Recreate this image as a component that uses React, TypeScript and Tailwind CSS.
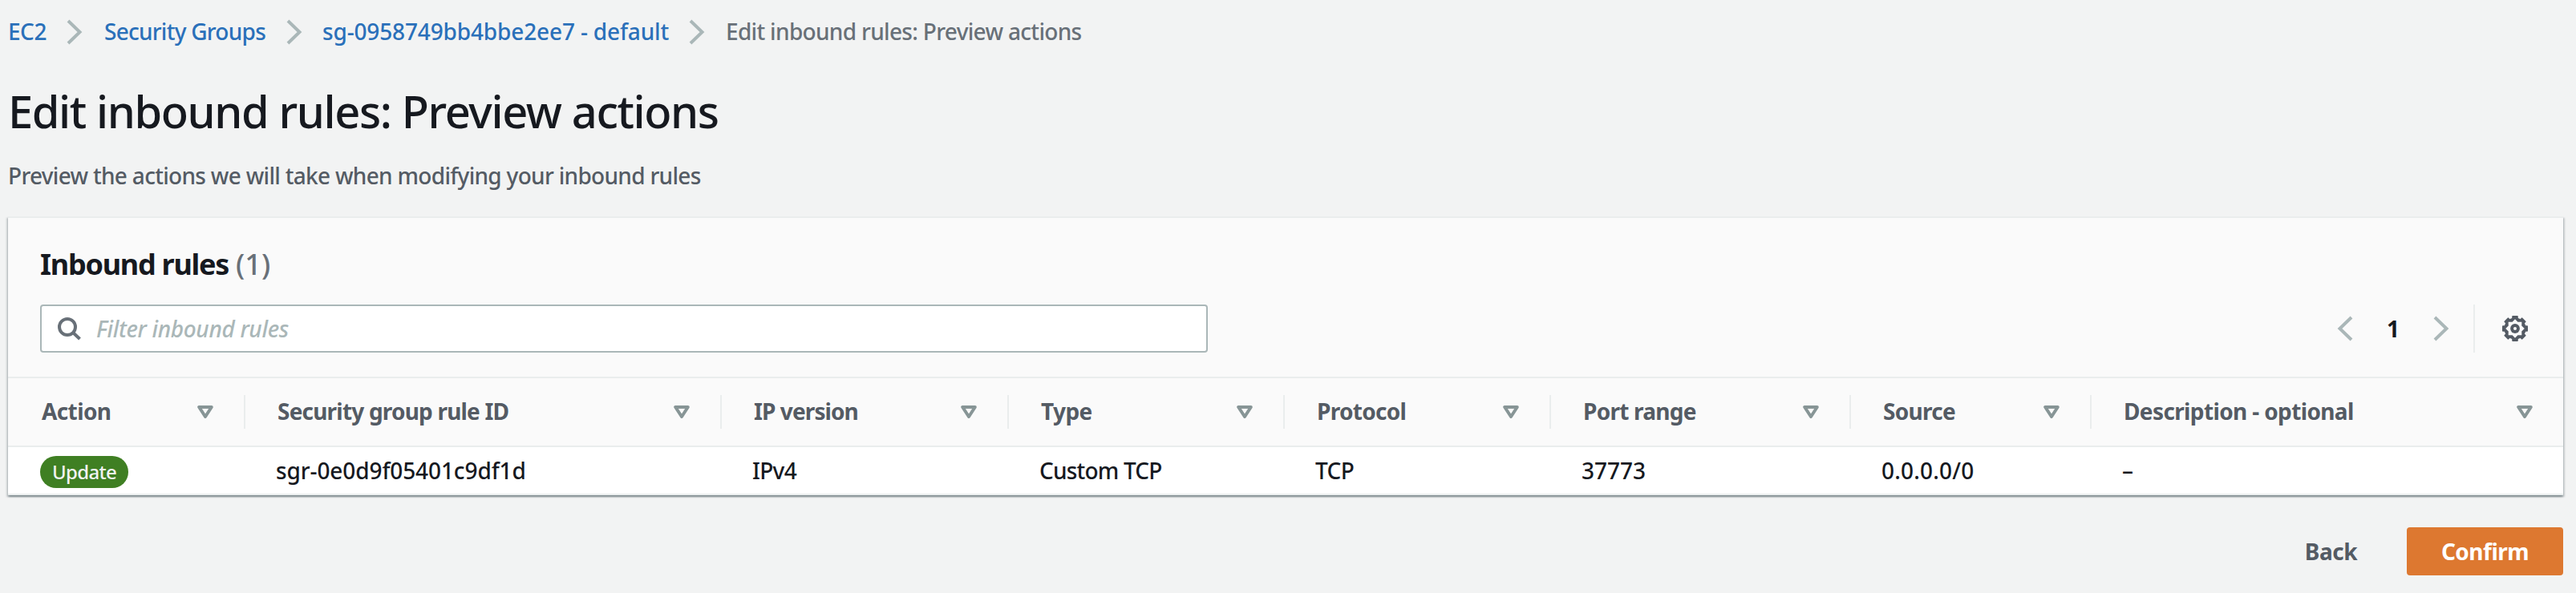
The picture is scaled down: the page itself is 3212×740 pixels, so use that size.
type Column = { label: string; value: string; tracking?: string; valueTracking?: string; badge?: boolean };

const columns: Column[] = [
  { label: "Action", value: "Update", tracking: "tracking-[-0.6px]", badge: true },
  { label: "Security group rule ID", value: "sgr-0e0d9f05401c9df1d", tracking: "tracking-[-0.8px]", valueTracking: "tracking-[-0.1px]" },
  { label: "IP version", value: "IPv4", tracking: "tracking-[-0.9px]", valueTracking: "tracking-[-0.7px]" },
  { label: "Type", value: "Custom TCP", tracking: "tracking-[-0.6px]", valueTracking: "tracking-[-0.8px]" },
  { label: "Protocol", value: "TCP", tracking: "tracking-[-0.7px]", valueTracking: "tracking-[-0.6px]" },
  { label: "Port range", value: "37773", tracking: "tracking-[-0.75px]" },
  { label: "Source", value: "0.0.0.0/0", tracking: "tracking-[-0.7px]", valueTracking: "tracking-[0.2px]" },
  { label: "Description - optional", value: "–", tracking: "tracking-[-0.63px]" },
];

const gridCols = "grid grid-cols-[296px_594px_358px_344px_332px_374px_300px_1fr]";

const gearStar = Array.from({ length: 16 }, (_, i) => {
  const r = i % 2 === 0 ? 11.8 : 8.9;
  const a = (i * Math.PI) / 8;
  return `${(16 + r * Math.sin(a)).toFixed(2)},${(16 - r * Math.cos(a)).toFixed(2)}`;
}).join(" ");

function ChevronRight({ className = "" }: { className?: string }) {
  return (
    <svg className={className} width="20" height="32" viewBox="0 0 20 32" fill="none" stroke="#aab7b8" strokeWidth="4">
      <path d="M2 2l14.5 14L2 30" />
    </svg>
  );
}

function ChevronLeft() {
  return (
    <svg width="20" height="32" viewBox="0 0 20 32" fill="none" stroke="#aab7b8" strokeWidth="4">
      <path d="M18 2L3.5 16 18 30" />
    </svg>
  );
}

function SortIcon() {
  return (
    <svg className="shrink-0" width="20" height="18" viewBox="0 0 20 18" fill="none" stroke="#879596" strokeWidth="4" strokeLinejoin="round">
      <path d="M2.2 3h15.6L10 15z" />
    </svg>
  );
}

function SearchIcon() {
  return (
    <svg width="32" height="32" viewBox="0 0 32 32" fill="none" stroke="#687078" strokeWidth="4">
      <circle cx="14" cy="14" r="10" />
      <path d="M21 21l8.5 8" />
    </svg>
  );
}

function GearIcon() {
  return (
    <svg width="32" height="32" viewBox="0 0 32 32" fill="#545b64">
      <circle cx="16" cy="16" r="13.6" />
      {[0, 45, 90, 135].map((deg) => (
        <rect key={deg} x="12.2" y="0" width="7.6" height="32" rx="1" transform={`rotate(${deg} 16 16)`} />
      ))}
      <polygon points={gearStar} fill="#fafafa" />
      <circle cx="16" cy="16" r="5.9" />
      <circle cx="16" cy="16" r="2" fill="#fafafa" />
    </svg>
  );
}

export default function App() {
  return (
    <div className="h-[740px] w-[3212px] overflow-hidden bg-[#f2f3f3] pl-[10px] pr-4 pt-[19px] font-['Noto_Sans',sans-serif] text-[28px] font-medium leading-[40px] text-[#16191f]">
      <nav className="flex h-10 items-center whitespace-nowrap text-[#2a70ba]">
        <a className="w-[73px] tracking-[-0.5px]">EC2</a>
        <ChevronRight className="mt-[2px]" />
        <a className="ml-[27px] w-[227px] tracking-[-0.75px]">Security Groups</a>
        <ChevronRight className="mt-[2px]" />
        <a className="ml-[25px] w-[457px] tracking-[-0.15px]">sg-0958749bb4bbe2ee7 - default</a>
        <ChevronRight className="mt-[2px]" />
        <span className="ml-[26px] tracking-[-0.68px] text-[#687078]">Edit inbound rules: Preview actions</span>
      </nav>

      <h1 className="mt-[43px] text-[56px] leading-[72px] tracking-[-1.4px]">Edit inbound rules: Preview actions</h1>
      <p className="mt-[25px] tracking-[-0.7px] text-[#545b64]">
        Preview the actions we will take when modifying your inbound rules
      </p>

      <section className="mt-[31px] border-t-2 border-[#eaeded] bg-white shadow-[0_2px_2px_0_rgba(0,28,36,0.3),2px_2px_2px_0_rgba(0,28,36,0.15),-2px_2px_2px_0_rgba(0,28,36,0.15)]">
        <div className="h-[200px] border-b-2 border-[#eaeded] bg-[#fafafa] px-10 pt-[34px]">
          <h2 className="flex gap-[9px] text-[36px] leading-[48px]">
            <span className="font-bold tracking-[-1.25px]">Inbound rules</span>
            <span className="text-[#687078]">(1)</span>
          </h2>
          <div className="mt-[26px] flex h-[60px] items-center justify-between">
            <div className="flex h-[60px] w-[1456px] items-center gap-[18px] rounded-[4px] border-2 border-[#aab7b8] bg-white pl-[18px]">
              <SearchIcon />
              <span className="italic tracking-[-0.35px] text-[#aab7b8]">Filter inbound rules</span>
            </div>
            <div className="flex h-[60px] items-center">
              <ChevronLeft />
              <span className="ml-[42px] w-[58px] font-bold">1</span>
              <ChevronRight />
              <span className="ml-[30px] mr-[34px] h-[60px] w-[2px] bg-[#eaeded]" />
              <span className="mr-1">
                <GearIcon />
              </span>
            </div>
          </div>
        </div>

        <div className={`${gridCols} h-[86px] border-b-2 border-[#eaeded] bg-[#fafafa] pt-[21px]`}>
          {columns.map((c, i) => (
            <div
              key={c.label}
              className={`flex h-[42px] items-center justify-between pr-[38px] ${i === 0 ? "pl-[42px]" : "pl-10"} ${i < columns.length - 1 ? "border-r-2 border-[#eaeded]" : ""}`}
            >
              <span className={`-mt-[2px] whitespace-nowrap font-bold text-[#545b64] ${c.tracking ?? ""}`}>{c.label}</span>
              <SortIcon />
            </div>
          ))}
        </div>

        <div className={`${gridCols} h-[60px] items-center border-b-2 border-[#eaeded] bg-white`}>
          {columns.map((c) =>
            c.badge ? (
              <div key={c.label} className="pl-10">
                <span className="mt-[4px] flex h-10 w-[110px] items-center justify-center rounded-[20px] bg-[#3f7f23] pb-px text-[24px] tracking-[-0.7px] text-[#f2f3f3]">
                  {c.value}
                </span>
              </div>
            ) : (
              <div key={c.label} className={`whitespace-nowrap pl-[38px] ${c.valueTracking ?? ""}`}>
                {c.value}
              </div>
            ),
          )}
        </div>
      </section>

      <div className="mt-10 flex h-[60px] items-center justify-end font-bold">
        <button className="mr-[62px] tracking-[-0.5px] text-[#545b64]">Back</button>
        <button className="h-[60px] w-[195px] rounded-[4px] bg-[#dd7830] tracking-[-0.5px] text-white">Confirm</button>
      </div>
    </div>
  );
}
